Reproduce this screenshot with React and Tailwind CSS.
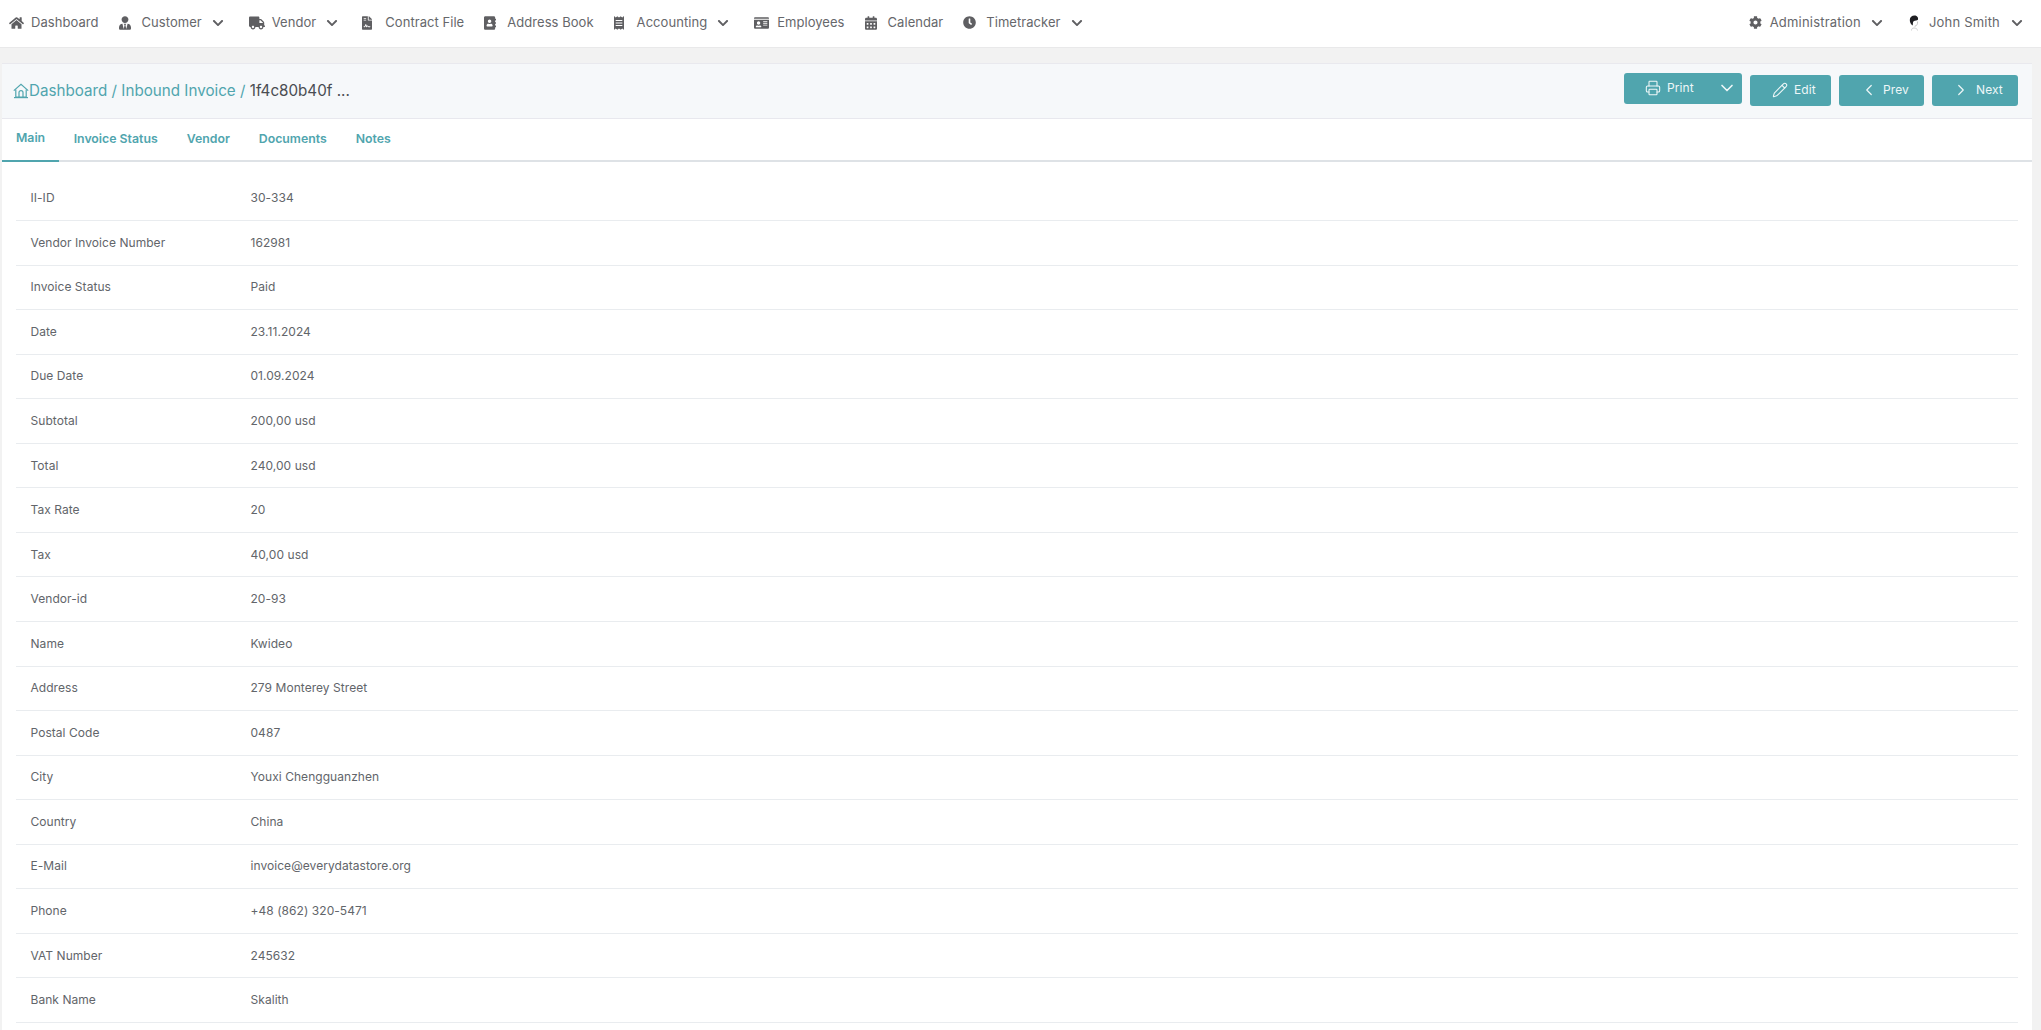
import React from 'react';
import { FaHome, FaUserTie, FaTruck, FaFileContract, FaAddressBook, FaReceipt, FaIdCard, FaCalendarAlt, FaClock, FaCog, FaChevronDown } from 'react-icons/fa';
import { Printer, Pencil, ChevronLeft, ChevronRight, ChevronDown } from 'lucide-react';

const navItems = [
  { label: 'Dashboard', icon: FaHome, iconClass: 'w-[15px] h-[14px]', textClass: 'ml-[7px]', itemClass: 'ml-[9px]' },
  { label: 'Customer', icon: FaUserTie, iconClass: 'w-[12px] h-[14px]', textClass: 'ml-[11px]', itemClass: 'ml-[20px]', caret: true },
  { label: 'Vendor', icon: FaTruck, iconClass: 'w-[16px] h-[14px]', textClass: 'ml-[7px]', itemClass: 'ml-[25px]', caret: true },
  { label: 'Contract File', icon: FaFileContract, iconClass: 'w-[10px] h-[14px]', textClass: 'ml-[13px]', itemClass: 'ml-[24px]' },
  { label: 'Address Book', icon: FaAddressBook, iconClass: 'w-[12px] h-[14px]', textClass: 'ml-[11px]', itemClass: 'ml-[20px]' },
  { label: 'Accounting', icon: FaReceipt, iconClass: 'w-[10px] h-[14px]', textClass: 'ml-[13px]', itemClass: 'ml-[20px]', caret: true },
  { label: 'Employees', icon: FaIdCard, iconClass: 'w-[15px] h-[14px]', textClass: 'ml-[8px]', itemClass: 'ml-[25px]' },
  { label: 'Calendar', icon: FaCalendarAlt, iconClass: 'w-[12px] h-[14px]', textClass: 'ml-[11px]', itemClass: 'ml-[20px]' },
  { label: 'Timetracker', icon: FaClock, iconClass: 'w-[13px] h-[13px]', textClass: 'ml-[10px]', itemClass: 'ml-[20px]', caret: true },
];

const tabs = ['Main', 'Invoice Status', 'Vendor', 'Documents', 'Notes'];

const rows = [
  ['II-ID', '30-334'],
  ['Vendor Invoice Number', '162981'],
  ['Invoice Status', 'Paid'],
  ['Date', '23.11.2024'],
  ['Due Date', '01.09.2024'],
  ['Subtotal', '200,00 usd'],
  ['Total', '240,00 usd'],
  ['Tax Rate', '20'],
  ['Tax', '40,00 usd'],
  ['Vendor-id', '20-93'],
  ['Name', 'Kwideo'],
  ['Address', '279 Monterey Street'],
  ['Postal Code', '0487'],
  ['City', 'Youxi Chengguanzhen'],
  ['Country', 'China'],
  ['E-Mail', 'invoice@everydatastore.org'],
  ['Phone', '+48 (862) 320-5471'],
  ['VAT Number', '245632'],
  ['Bank Name', 'Skalith'],
];

const Caret = ({ className }) => <FaChevronDown className={`w-[12px] h-[12px] text-[#5f5f62] ${className}`} />;

const Avatar = () => (
  <svg viewBox="0 0 12 16" className="w-[12px] h-[16px]">
    <path d="M3.5 15.5c0-1.6.8-2.5 2.5-2.5s3.5.9 3.5 2.5" fill="none" stroke="#c4c4c4" strokeWidth="0.8" />
    <path d="M9.6 6.5c.2 2.6-1 4.6-3 4.8" fill="none" stroke="#b5b5b5" strokeWidth="0.8" />
    <path d="M7.5.6C4.4.2 1.8 1.8 1.8 5c0 2.4 1.1 4.4 2.8 5.6.5-.9.1-2.4.5-3.7C5.5 5.6 7.6 5.8 9.8 5c.9-1.8-.3-3.8-2.3-4.4z" fill="#1f1f23" />
  </svg>
);

const HomeOutline = () => (
  <svg viewBox="0 0 16 16" fill="none" stroke="currentColor" strokeWidth="1.2" className="w-[16px] h-[16px]">
    <path d="M.8 7.6 8 1.4l7.2 6.2" />
    <path d="M2.8 6.4v7.8h10.4V6.4" />
    <path d="M6 14.2V9.6a2 2 0 0 1 4 0v4.6" />
    <path d="M1 14.6h14" />
  </svg>
);

const Button = ({ icon: Icon, label, className, iconClass, textClass }) => (
  <button className={`flex items-center h-[31px] rounded-[3px] bg-[#50a5ae] text-[#eef7f8] text-[12px] ${className}`}>
    <Icon className={iconClass} strokeWidth={1.6} />
    <span className={`${textClass} tracking-[0.1px]`}>{label}</span>
  </button>
);

export default function App() {
  return (
    <div className="h-[1030px] overflow-hidden bg-[#f2f2f2] font-['Inter',sans-serif]">
      <header className="flex items-center justify-between h-[48px] pb-[2px] bg-white border-b border-[#e9e9ea] text-[13px] text-[#66676b] pr-[18px]">
        <nav className="flex items-center">
          {navItems.map((item) => (
            <a key={item.label} className={`flex items-center ${item.itemClass}`}>
              <item.icon className={`${item.iconClass} text-[#5f5f62]`} />
              <span className={`${item.textClass} tracking-[0.05px]`}>{item.label}</span>
              {item.caret && <Caret className="ml-[10px]" />}
            </a>
          ))}
        </nav>
        <div className="flex items-center">
          <FaCog className="w-[13px] h-[13px] text-[#5f5f62]" />
          <span className="ml-[8px] tracking-[0.2px]">Administration</span>
          <Caret className="ml-[10px]" />
          <span className="ml-[25px]"><Avatar /></span>
          <span className="ml-[9px] tracking-[0.2px]">John Smith</span>
          <Caret className="ml-[11px]" />
        </div>
      </header>

      <main className="h-[967px] ml-[2px] mr-[9px] mt-[15px] bg-white border-t border-[#e9e9ee]">
        <div className="flex items-center justify-between h-[55px] bg-[#f6f8fa] border-b border-[#e8e8ee] pl-[11px] pr-[14px]">
          <div className="flex items-center text-[15.2px] text-[#50a5ae]">
            <HomeOutline />
            <span>Dashboard / Inbound Invoice /&nbsp;</span>
            <span className="text-[#4a4d52]">1f4c80b40f ...</span>
          </div>
          <div className="flex items-center gap-[8px] mb-[2px]">
            <div className="flex items-center h-[31px] -mt-[4px] rounded-[3px] bg-[#50a5ae] text-[#eef7f8] text-[12px] w-[118px] pl-[21px]">
              <Printer className="w-[16px] h-[16px]" strokeWidth={1.6} />
              <span className="ml-[6px] tracking-[0.1px]">Print</span>
              <ChevronDown className="w-[20px] h-[20px] ml-[23px]" strokeWidth={2} />
            </div>
            <Button icon={Pencil} label="Edit" className="w-[81px] pl-[22px]" iconClass="w-[16px] h-[16px]" textClass="ml-[6px]" />
            <Button icon={ChevronLeft} label="Prev" className="w-[85px] pl-[21px]" iconClass="w-[18px] h-[18px]" textClass="ml-[5px]" />
            <Button icon={ChevronRight} label="Next" className="w-[86px] pl-[20px]" iconClass="w-[18px] h-[18px]" textClass="ml-[6px]" />
          </div>
        </div>

        <div className="flex h-[43px] border-b-2 border-[#dee2e6] text-[12.3px] font-semibold text-[#50a5ae]">
          {tabs.map((tab, i) => (
            <a
              key={tab}
              className={`flex items-center pb-[2px] -mb-[2px] ${i === 0 ? 'px-[14px] border-b-2 border-[#50a5ae]' : 'px-[14.5px]'}`}
            >
              {tab}
            </a>
          ))}
        </div>

        <div className="mt-[14.5px] mx-[14px] text-[12px] tracking-[0.05px] text-[#62656a]">
          {rows.map(([label, value]) => (
            <div key={label} className="flex items-center h-[44.55px] border-b border-[#e9ecef] px-[14.5px]">
              <div className="w-[220px]">{label}</div>
              <div>{value}</div>
            </div>
          ))}
        </div>
      </main>
    </div>
  );
}
